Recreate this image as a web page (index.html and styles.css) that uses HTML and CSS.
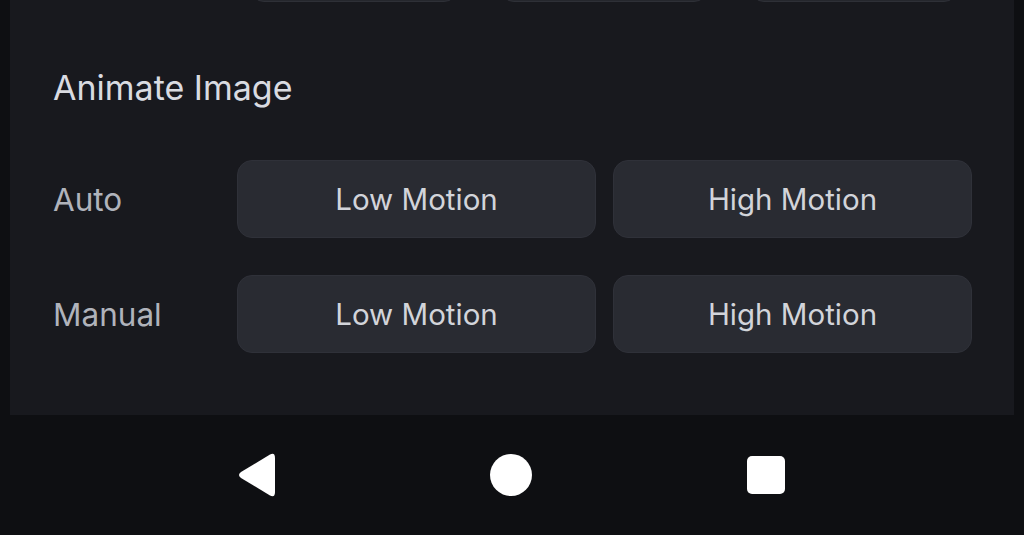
FILE: index.html
```html
<!DOCTYPE html>
<html>
    <head>
        <title>Animate Image</title>
        <link rel="stylesheet" href="styles.css">
    </head>
    <body>
        <div class="panel">
            <div class="prev-row">
                <button class="chip"></button>
                <button class="chip"></button>
                <button class="chip"></button>
            </div>
            <div class="title">Animate Image</div>
            <div class="opt-row">
                <span class="label">Auto</span>
                <button class="btn">Low Motion</button>
                <button class="btn">High Motion</button>
            </div>
            <div class="opt-row">
                <span class="label">Manual</span>
                <button class="btn">Low Motion</button>
                <button class="btn">High Motion</button>
            </div>
        </div>
        <div class="navbar">
            <svg class="nav-back" width="40" height="46" viewBox="0 0 40 46">
                <path d="M33 2.5 Q38 0 38 6 L38 40 Q38 46 33 43.5 L4 26 Q0 23 4 20 Z" fill="#fff"/>
            </svg>
            <span class="nav-home"></span>
            <span class="nav-recent"></span>
        </div>
    </body>
</html>
```

FILE: styles.css
```css
html, body {
    margin: 0;
    padding: 0;
    height: 100%;
    overflow: hidden;
    background: #0e0f12;
    font-family: Inter, 'Noto Sans', sans-serif;
}
.panel {
    margin: 0 10px;
    height: 415px;
    background: #18191e;
    padding: 0 42px 0 43px;
    box-sizing: border-box;
    overflow: hidden;
}
.prev-row {
    display: flex;
    gap: 42px;
    margin-top: -60px;
    padding-left: 197px;
}
.chip {
    width: 208px;
    height: 62px;
    border-radius: 14px;
    background: #25272d;
    border: 1px solid #2e3037;
}
.title {
    margin-top: 64px;
    font-size: 34px;
    color: #d9dbe1;
    line-height: 44px;
}
.opt-row {
    display: flex;
    align-items: center;
    gap: 17px;
    margin-top: 50px;
}
.opt-row + .opt-row {
    margin-top: 37px;
}
.label {
    width: 167px;
    font-size: 31.5px;
    color: #b0b3bb;
}
.btn {
    flex: 1;
    height: 78px;
    border-radius: 15px;
    background: #292b32;
    border: 1px solid #2f3139;
    color: #d2d4da;
    font-family: Inter, 'Noto Sans', sans-serif;
    font-size: 29.5px;
}
.navbar {
    height: 120px;
    display: flex;
    align-items: center;
    padding-left: 237px;
}
.nav-back {
    margin-right: 213px;
}
.nav-home {
    width: 42px;
    height: 42px;
    border-radius: 50%;
    background: #fff;
    margin-right: 215px;
}
.nav-recent {
    width: 38px;
    height: 38px;
    border-radius: 5px;
    background: #fff;
}
```
